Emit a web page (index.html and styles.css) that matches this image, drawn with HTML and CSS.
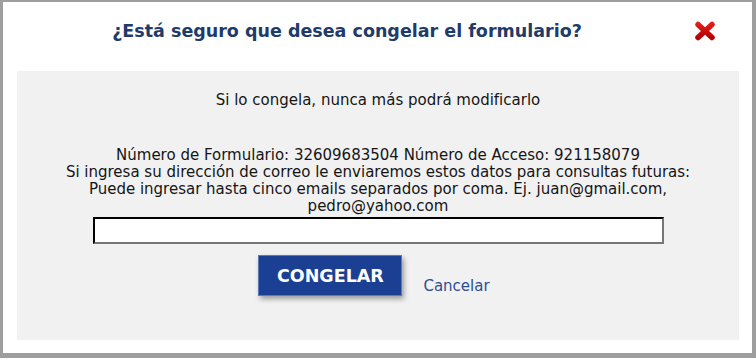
FILE: index.html
```html
<!DOCTYPE html>
<html lang="es">
<head>
<meta charset="utf-8">
<title>Congelar formulario</title>
<link rel="stylesheet" href="styles.css">
</head>
<body>
<div class="frame">
  <div class="dialog">
    <div class="header">
      <h1 class="title">¿Está seguro que desea congelar el formulario?</h1>
      <button class="close" type="button" aria-label="Cerrar">
        <svg width="22" height="20" viewBox="0 0 22 20">
          <defs>
            <linearGradient id="xg" x1="0" y1="0" x2="0" y2="1">
              <stop offset="0" stop-color="#e21a1a"/>
              <stop offset="1" stop-color="#b40000"/>
            </linearGradient>
          </defs>
          <g stroke="url(#xg)" stroke-width="5.5" stroke-linecap="round">
            <line x1="4" y1="3.5" x2="18" y2="16.5"/>
            <line x1="18" y1="3.5" x2="4" y2="16.5"/>
          </g>
        </svg>
      </button>
    </div>
    <div class="panel">
      <p class="warn">Si lo congela, nunca más podrá modificarlo</p>
      <div class="info">
        Número de Formulario: 32609683504 Número de Acceso: 921158079<br>
        Si ingresa su dirección de correo le enviaremos estos datos para consultas futuras:<br>
        Puede ingresar hasta cinco emails separados por coma. Ej. juan@gmail.com, pedro@yahoo.com
      </div>
      <input class="email" type="text">
      <div class="actions">
        <button class="congelar" type="button">CONGELAR</button>
        <a class="cancel" href="#">Cancelar</a>
      </div>
    </div>
  </div>
</div>
</body>
</html>
```

FILE: styles.css
```css
html, body {
  margin: 0;
  padding: 0;
}
body {
  font-family: "DejaVu Sans", Verdana, sans-serif;
  background: #9c9c9c;
}
.frame {
  box-sizing: border-box;
  width: 756px;
  height: 358px;
  padding: 2px 4px 5px 3px;
  background: #9e9e9e;
}
.dialog {
  box-sizing: border-box;
  height: 100%;
  background: #ffffff;
  padding: 0 13px 13px 14px;
  display: flex;
  flex-direction: column;
}
.header {
  box-sizing: border-box;
  height: 69px;
  padding-top: 17px;
  display: flex;
  align-items: flex-start;
}
.title {
  flex: 1;
  margin: 0;
  text-align: center;
  font-size: 17.5px;
  line-height: 24px;
  font-weight: bold;
  color: #1f3b6a;
}
.close {
  width: 62px;
  height: 24px;
  border: 0;
  padding: 0 0 0 17px;
  background: transparent;
  display: flex;
  align-items: center;
  justify-content: flex-start;
  cursor: pointer;
}
.panel {
  flex: 1;
  background: #f1f1f1;
  display: flex;
  flex-direction: column;
  align-items: center;
  color: #151515;
  font-size: 15px;
}
.warn {
  margin: 21px 0 0;
  line-height: 17px;
}
.info {
  margin-top: 38px;
  width: 690px;
  text-align: center;
  line-height: 17px;
}
.email {
  box-sizing: border-box;
  width: 571px;
  height: 27px;
  margin: 2px 0 0 0;
  border: 2px inset #767676;
  border-top-color: #333;
  border-left-color: #333;
  background: #fff;
}
.actions {
  display: flex;
  align-items: center;
  margin-top: 11px;
  margin-left: -8px;
}
.congelar {
  width: 144px;
  height: 41px;
  background: #1b3f92;
  border: 1px solid #5b79bb;
  color: #fff;
  font-family: "DejaVu Sans", Verdana, sans-serif;
  font-size: 17.5px;
  font-weight: bold;
  box-shadow: 2px 3px 5px rgba(0, 0, 0, 0.35);
  cursor: pointer;
}
.cancel {
  margin-left: 21px;
  margin-top: 21px;
  font-size: 15px;
  color: #2c4f92;
  text-decoration: none;
}
```
